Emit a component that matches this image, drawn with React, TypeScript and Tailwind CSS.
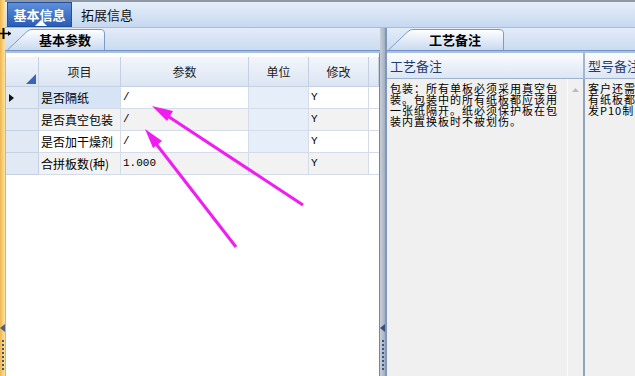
import React from 'react';

const cjk = { fontFamily: '"Noto Sans CJK SC", "Noto Sans", sans-serif' };
const mono = { fontFamily: '"Liberation Mono", "Noto Sans CJK SC", monospace' };

const rows = [
  { name: '是否隔纸', param: '/', mod: 'Y' },
  { name: '是否真空包装', param: '/', mod: 'Y' },
  { name: '是否加干燥剂', param: '/', mod: 'Y' },
  { name: '合拼板数(种)', param: '1.000', mod: 'Y' },
];

const note = ['包装：所有单板必须采用真空包', '装。包装中的所有纸板都应该用', '一张纸隔开。纸必须保护板在包', '装内置换板时不被划伤。'];
const note2 = ['客户还需', '有纸板都', '发P10制'];

function PanelTab({ label, width }: { label: string; width: number }) {
  return (
    <div className="relative h-[21px] mt-[1px] flex items-center justify-center" style={{ width }}>
      <svg className="absolute inset-0" width={width} height={21}>
        <defs>
          <linearGradient id={'tg' + width} x1="0" y1="0" x2="0" y2="1">
            <stop offset="0" stopColor="#ffffff" />
            <stop offset="1" stopColor="#c9daf0" />
          </linearGradient>
        </defs>
        <path
          d={`M0.5,21 L20,2.5 Q22,0.5 25,0.5 L${width - 4},0.5 Q${width - 0.5},0.5 ${width - 0.5},4 L${width - 0.5},21`}
          fill={`url(#tg${width})`}
          stroke="#7d9bc8"
        />
      </svg>
      <span className="relative pl-[18px] text-[13px] font-bold text-black leading-none">{label}</span>
    </div>
  );
}

function Grip({ dark }: { dark?: boolean }) {
  return (
    <div className="flex flex-col items-center gap-[2px]">
      <svg width="5" height="8">
        <path d="M0,4 L5,0 L5,8 Z" fill={dark ? '#3a4f78' : '#4a5f86'} />
      </svg>
      <div className="h-[4px]" />
      {[0, 1, 2, 3, 4, 5, 6, 7].map((i) => (
        <div key={i} className="w-[2px] h-[2px] bg-[#3c5580]" />
      ))}
    </div>
  );
}

export default function App() {
  return (
    <div className="relative w-[635px] h-[376px] overflow-hidden flex bg-white" style={cjk}>
      {/* left yellow strip */}
      <div className="w-[6px] h-full flex flex-col justify-end pb-[2px] bg-linear-to-r from-[#eeb64c] to-[#fbe3a0]">
        <div className="mb-[4px]">
          <Grip />
        </div>
      </div>

      <div className="flex-1 flex flex-col">
        {/* top tabs */}
        <div className="h-[28px] flex items-end border-t-2 border-[#8d97a6] border-b border-b-[#a8bcd8] bg-linear-to-b from-[#e6eef9] to-[#c6d8ef]">
          <div className="relative ml-[2px] w-[65px] h-[25px] flex items-center justify-center bg-linear-to-b from-[#5f8fd9] to-[#2a5db6] border border-[#22509e]">
            <span className="text-[13px] font-bold text-white leading-none">基本信息</span>
            <div className="absolute bottom-0 left-[27px] w-0 h-0 border-l-[6px] border-r-[6px] border-b-[6px] border-l-transparent border-r-transparent border-b-white" />
          </div>
          <div className="h-[25px] flex items-center pl-[9px]">
            <span className="text-[13px] text-[#111] leading-none">拓展信息</span>
          </div>
        </div>

        <div className="flex-1 flex">
          {/* left panel */}
          <div className="w-[375px] flex flex-col">
            <div className="h-[22px] flex items-end pl-[2px] bg-linear-to-b from-[#e3ecf8] to-[#cbdbf0]">
              <PanelTab label="基本参数" width={98} />
            </div>
            <div className="h-[3px] border-t border-[#7293c4] bg-[#a9c0e2]" />
            <div className="flex-1 bg-white border-l border-[#a4bad8] border-r border-r-[#6f86ab] pt-[4px]">
              <div className="grid grid-cols-[33px_82px_128px_60px_60px_10px] text-[12px] text-black">
                <div className="relative h-[30px] border-r border-b border-[#c3d1e2] bg-linear-to-b from-[#f3f6fb] to-[#dbe5f2]">
                  <svg className="absolute right-[2px] bottom-[2px]" width="10" height="10">
                    <path d="M10,0 L10,10 L0,10 Z" fill="#3b64b5" />
                  </svg>
                </div>
                {['项目', '参数', '单位', '修改', ''].map((h, i) => (
                  <div
                    key={i}
                    className="h-[30px] flex items-center justify-center border-r border-b border-[#c3d1e2] bg-linear-to-b from-[#f3f6fb] to-[#dbe5f2] text-[#222]"
                  >
                    {h}
                  </div>
                ))}
                {rows.map((r, i) => {
                  const bg = i % 2 === 0 ? 'bg-white' : 'bg-[#f2f2f2]';
                  return (
                    <React.Fragment key={i}>
                      <div className="h-[22px] flex items-center pl-[3px] border-r border-b border-[#c3d1e2] bg-[#e1e9f4]">
                        {i === 0 && (
                          <svg width="5" height="8">
                            <path d="M0,0 L5,4 L0,8 Z" fill="#111" />
                          </svg>
                        )}
                      </div>
                      <div className={`h-[22px] flex items-center pl-[2px] border-r border-b border-[#d3dce8] whitespace-nowrap ${i === 0 ? 'bg-[#d6e4f6]' : bg}`}>
                        {r.name}
                      </div>
                      <div className={`h-[22px] flex items-center pl-[2px] border-r border-b border-[#d3dce8] ${bg}`}>
                        <span className="text-[11px]" style={mono}>{r.param}</span>
                      </div>
                      <div className={`h-[22px] border-r border-b border-[#d3dce8] ${i < 3 ? 'bg-[#e6eefa]' : bg}`} />
                      <div className={`h-[22px] flex items-center pl-[2px] border-r border-b border-[#d3dce8] ${bg}`}>
                        <span className="text-[11px]" style={mono}>{r.mod}</span>
                      </div>
                      <div className="h-[22px] border-b border-[#d3dce8] bg-white" />
                    </React.Fragment>
                  );
                })}
              </div>
            </div>
          </div>

          {/* splitter */}
          <div className="w-[7px] flex flex-col justify-end pb-[2px] items-center bg-linear-to-r from-[#c9d0da] to-[#a4afbf] border-r-2 border-[#7d97bf]">
            <div className="mb-[4px]">
              <Grip dark />
            </div>
          </div>

          {/* right panel */}
          <div className="flex-1 flex flex-col">
            <div className="h-[22px] flex items-end pl-[1px] bg-linear-to-b from-[#e3ecf8] to-[#cbdbf0]">
              <PanelTab label="工艺备注" width={116} />
            </div>
            <div className="h-[3px] border-t border-[#7293c4] bg-[#a9c0e2]" />
            <div className="h-[26px] flex border-b border-[#9fb3cf] bg-linear-to-b from-[#fbfcfe] to-[#dce6f3]">
              <div className="w-[196px] flex items-center pl-[3px] text-[13px] text-[#1d3e74]">工艺备注</div>
              <div className="w-[2px] bg-[#a3b6d0]" />
              <div className="flex-1 flex items-center pl-[3px] text-[13px] text-[#1d3e74] whitespace-nowrap overflow-hidden">型号备注</div>
            </div>
            <div className="flex-1 flex bg-[#f0f0f0]">
              <div className="w-[181px] pl-[3px] pt-[4px] text-[11px] leading-[11px] tracking-[1px] text-black border-r border-[#fafafa]">
                {note.map((l) => (
                  <div key={l} className="whitespace-nowrap">{l}</div>
                ))}
              </div>
              <div className="w-[15px] flex justify-center pt-[9px]">
                <svg width="7" height="4">
                  <path d="M0,4 L3.5,0 L7,4 Z" fill="#b8bcc4" />
                </svg>
              </div>
              <div className="w-[2px] bg-[#8ea4c2]" />
              <div className="flex-1 pl-[3px] pt-[4px] text-[11px] leading-[11px] tracking-[1px] text-black overflow-hidden">
                {note2.map((l) => (
                  <div key={l} className="whitespace-nowrap">{l}</div>
                ))}
              </div>
            </div>
          </div>
        </div>
      </div>

      {/* resize cursor */}
      <svg className="absolute left-0 top-[28px]" width="12" height="11">
        <path d="M3.5,0 L3.5,11" stroke="#000" strokeWidth="2" />
        <path d="M0,5.5 L11,5.5" stroke="#000" strokeWidth="1.5" />
        <path d="M11,5.5 L8,3 L8,8 Z" fill="#000" />
      </svg>

      {/* annotation arrows */}
      <svg className="absolute inset-0 pointer-events-none" width="635" height="376">
        <line x1="303" y1="205" x2="160" y2="111" stroke="#f01cf0" strokeWidth="3" />
        <polygon points="152,106 167,121 173,111" fill="#f01cf0" />
        <line x1="236" y1="247" x2="150" y2="136" stroke="#f01cf0" strokeWidth="3" />
        <polygon points="145,129 153,148 162,141" fill="#f01cf0" />
      </svg>
    </div>
  );
}
